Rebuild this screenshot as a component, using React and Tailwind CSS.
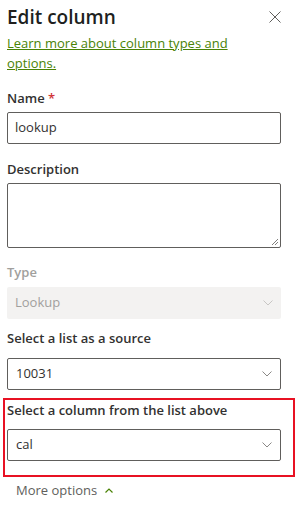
import React from "react";

const font = { fontFamily: '"Open Sans", "Noto Sans", sans-serif' };

function Chevron({ className = "" }) {
  return (
    <svg width="10" height="6" viewBox="0 0 10 6" className={className}>
      <path d="M0.5 0.5 L5 5 L9.5 0.5" fill="none" stroke="currentColor" strokeWidth="1" />
    </svg>
  );
}

function Label({ children, muted }) {
  return (
    <div className={`h-[20px] text-[13px] leading-[20px] font-semibold ${muted ? "text-[#a19f9d]" : "text-[#323130]"}`}>
      {children}
    </div>
  );
}

function Select({ value, disabled }) {
  return (
    <div
      className={`h-[32px] w-[274px] rounded-[2px] flex items-center justify-between pl-[8px] pr-[8px] text-[13px] ${
        disabled ? "bg-[#f3f2f1] text-[#a19f9d]" : "border border-[#605e5c] pl-[7px] pr-[7px] text-[#323130]"
      }`}
    >
      <span>{value}</span>
      <Chevron className={disabled ? "text-[#c8c6c4]" : "text-[#8a8886]"} />
    </div>
  );
}

export default function App() {
  return (
    <div className="w-[305px] h-[517px] bg-white px-[7px] overflow-hidden" style={font}>
      <div className="flex items-center justify-between h-[33px]">
        <h1 className="text-[19px] leading-[28px] font-semibold text-[#201f1e]">Edit column</h1>
        <svg width="12" height="12" viewBox="0 0 12 12" className="mr-[17px] text-[#605e5c]">
          <path d="M0.5 0.5 L11.5 11.5 M11.5 0.5 L0.5 11.5" stroke="currentColor" strokeWidth="1" />
        </svg>
      </div>
      <a className="block text-[13px] leading-[20px] text-[#498205] underline pr-[40px]" href="#">
        Learn more about column types and options.
      </a>

      <div className="mt-[15px]">
        <Label>
          Name <span className="text-[#d13438]">*</span>
        </Label>
        <div className="mt-[4px] h-[32px] w-[274px] rounded-[2px] border border-[#605e5c] flex items-center pl-[7px] text-[13px] text-[#323130]">
          lookup
        </div>
      </div>

      <div className="mt-[15px]">
        <Label>Description</Label>
        <div className="mt-[4px] h-[65px] w-[274px] rounded-[2px] border border-[#605e5c] relative">
          <svg width="8" height="8" viewBox="0 0 8 8" className="absolute right-[1px] bottom-[1px] text-[#605e5c]">
            <path d="M7 1 L1 7 M7 4 L4 7" stroke="currentColor" strokeWidth="0.8" />
          </svg>
        </div>
      </div>

      <div className="mt-[14px]">
        <Label muted>Type</Label>
        <div className="mt-[5px]">
          <Select value="Lookup" disabled />
        </div>
      </div>

      <div className="mt-[9px]">
        <Label>Select a list as a source</Label>
        <div className="mt-[10px]">
          <Select value="10031" />
        </div>
      </div>

      <div className="mt-[8px] -ml-[4px] w-[292px] border-2 border-[#e81123] pl-[2px] pb-[14px]">
        <Label>Select a column from the list above</Label>
        <div className="mt-[9px]">
          <Select value="cal" />
        </div>
      </div>

      <div className="mt-[3px] h-[20px] pl-[9px] flex items-center gap-[8px] text-[13px] leading-[20px] text-[#605e5c]">
        <span>More options</span>
        <svg width="8" height="5" viewBox="0 0 8 5" className="text-[#498205]">
          <path d="M0.5 4.5 L4 1 L7.5 4.5" fill="none" stroke="currentColor" strokeWidth="1.2" />
        </svg>
      </div>
    </div>
  );
}
